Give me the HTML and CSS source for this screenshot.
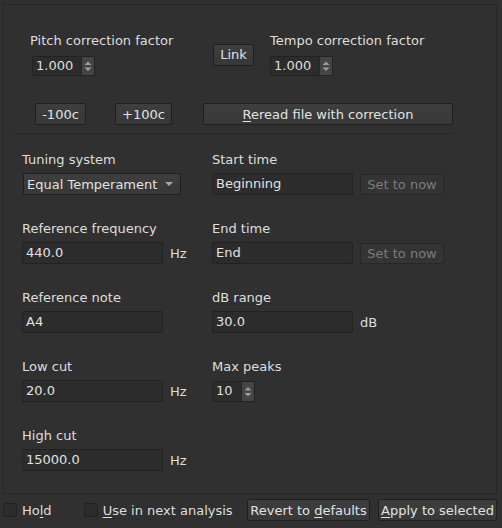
FILE: index.html
```html
<!DOCTYPE html>
<html>
<head>
<meta charset="utf-8">
<link rel="stylesheet" href="styles.css">
</head>
<body>
<div class="frame">
  <div class="top">
    <div class="row1">
      <div class="pitch">
        <div class="lbl">Pitch correction factor</div>
        <div class="spin w63 ml2"><span class="val">1.000</span><span class="arr"><svg width="12" height="18" viewBox="0 0 12 18"><path d="M2.5 8 L6 4.5 L9.5 8 Z M2.5 10.5 L6 14 L9.5 10.5 Z" fill="#9c9c9c"/></svg></span></div>
      </div>
      <div class="btn link"><span>Link</span></div>
      <div class="tempo">
        <div class="lbl">Tempo correction factor</div>
        <div class="spin w63"><span class="val">1.000</span><span class="arr"><svg width="12" height="18" viewBox="0 0 12 18"><path d="M2.5 8 L6 4.5 L9.5 8 Z M2.5 10.5 L6 14 L9.5 10.5 Z" fill="#9c9c9c"/></svg></span></div>
      </div>
    </div>
    <div class="row2">
      <div class="btn b1"><span>-100c</span></div>
      <div class="btn b2"><span>+100c</span></div>
      <div class="btn reread"><span><u>R</u>eread file with correction</span></div>
    </div>
    <div class="sep"></div>
  </div>
  <div class="grid">
    <div class="field">
      <div class="lbl">Tuning system</div>
      <div class="line">
        <div class="combo"><span>Equal Temperament</span><svg width="8" height="4" viewBox="0 0 8 4"><path d="M0 0 L8 0 L4 4 Z" fill="#a8a8a8"/></svg></div>
      </div>
    </div>
    <div class="field">
      <div class="lbl">Start time</div>
      <div class="line">
        <div class="input">Beginning</div>
        <div class="btn dis"><span>Set to now</span></div>
      </div>
    </div>
    <div class="field">
      <div class="lbl">Reference frequency</div>
      <div class="line">
        <div class="input">440.0</div>
        <span class="unit">Hz</span>
      </div>
    </div>
    <div class="field">
      <div class="lbl">End time</div>
      <div class="line">
        <div class="input">End</div>
        <div class="btn dis"><span>Set to now</span></div>
      </div>
    </div>
    <div class="field">
      <div class="lbl">Reference note</div>
      <div class="line">
        <div class="input">A4</div>
      </div>
    </div>
    <div class="field">
      <div class="lbl">dB range</div>
      <div class="line">
        <div class="input">30.0</div>
        <span class="unit">dB</span>
      </div>
    </div>
    <div class="field">
      <div class="lbl">Low cut</div>
      <div class="line">
        <div class="input">20.0</div>
        <span class="unit">Hz</span>
      </div>
    </div>
    <div class="field">
      <div class="lbl">Max peaks</div>
      <div class="line">
        <div class="spin w43"><span class="val">10</span><span class="arr"><svg width="12" height="19" viewBox="0 0 12 19"><path d="M2.5 8.5 L6 5 L9.5 8.5 Z M2.5 11 L6 14.5 L9.5 11 Z" fill="#9c9c9c"/></svg></span></div>
      </div>
    </div>
    <div class="field">
      <div class="lbl">High cut</div>
      <div class="line">
        <div class="input">15000.0</div>
        <span class="unit">Hz</span>
      </div>
    </div>
  </div>
</div>
<div class="footer">
  <span class="chk"></span><span class="ctext">Ho<u>l</u>d</span>
  <span class="chk c2"></span><span class="ctext"><u>U</u>se in next analysis</span>
  <div class="btn revert"><span>Revert to <u>d</u>efaults</span></div>
  <div class="btn apply"><span><u>A</u>pply to selected</span></div>
</div>
</body>
</html>
```
FILE: styles.css
```css
* { box-sizing: border-box; }
html, body { background: #303030; }
body {
  margin: 0;
  padding: 4px 5px 0 3px;
  width: 502px;
  height: 528px;
  overflow: hidden;
  font-family: "DejaVu Sans", sans-serif;
  font-size: 13px;
  line-height: 15px;
  color: #dedede;
}
u { text-decoration: underline; text-underline-offset: 2px; }

.frame { border: 1px solid #262626; }

.top { padding-top: 28px; }
.row1 { display: flex; align-items: center; padding-left: 26px; }
.pitch { width: 183px; }
.link { width: 41px; height: 22px; margin-right: 16px; }
.lbl { line-height: 15px; margin-bottom: 8px; white-space: nowrap; }
.ml2 { margin-left: 2px; }

.row2 { display: flex; margin-top: 27px; padding-left: 31px; }
.b1 { width: 51px; }
.b2 { width: 57px; margin-left: 29px; }
.reread { width: 250px; margin-left: 31px; }
.sep { margin: 8px 0 0 9px; width: 441px; height: 1px; background: #272727; }

.btn {
  display: flex;
  align-items: center;
  justify-content: center;
  height: 22px;
  background: linear-gradient(#3e3e3e, #383838);
  border: 1px solid #1f1f1f;
  border-radius: 2px;
  color: #e2e2e2;
  white-space: nowrap;
}
.btn.dis {
  width: 84px;
  height: 21px;
  background: #343434;
  border-color: #272727;
  color: #7c7c7c;
}

.spin {
  display: flex;
  height: 20px;
  background: #2c2c2c;
  border: 1px solid #222;
  border-radius: 2px;
  overflow: hidden;
}
.spin .val { flex: 1; padding-left: 3px; line-height: 18px; }
.spin .arr {
  width: 13px;
  background: #454545;
  border-left: 1px solid #262626;
  display: flex;
  align-items: center;
}
.w63 { width: 63px; }
.w43 { width: 43px; height: 21px; }

.grid {
  display: grid;
  grid-template-columns: 190px 1fr;
  row-gap: 24px;
  padding: 16px 0 22px 18px;
}
.field .lbl { padding-top: 2px; margin-bottom: 6px; }
.line { display: flex; align-items: center; gap: 7px; height: 22px; }
.input {
  width: 141px;
  height: 22px;
  padding-left: 3px;
  line-height: 20px;
  background: #2c2c2c;
  border: 1px solid #222;
  border-radius: 2px;
  color: #e2e2e2;
}
.combo {
  width: 158px;
  height: 22px;
  margin-left: 1px;
  display: flex;
  align-items: center;
  justify-content: space-between;
  padding: 0 7px 0 3px;
  background: linear-gradient(#3e3e3e, #383838);
  border: 1px solid #1f1f1f;
  border-radius: 2px;
  color: #e2e2e2;
}
.unit { color: #dedede; }

.footer {
  display: flex;
  align-items: center;
  height: 22px;
  margin-top: 5px;
}
.chk {
  width: 14px;
  height: 14px;
  background: #2c2c2c;
  border: 1px solid #222;
  border-radius: 2px;
}
.ctext { margin-left: 5px; }
.c2 { margin-left: 32px; }
.revert { width: 123px; margin-left: auto; }
.apply { width: 119px; margin-left: 8px; }
```
